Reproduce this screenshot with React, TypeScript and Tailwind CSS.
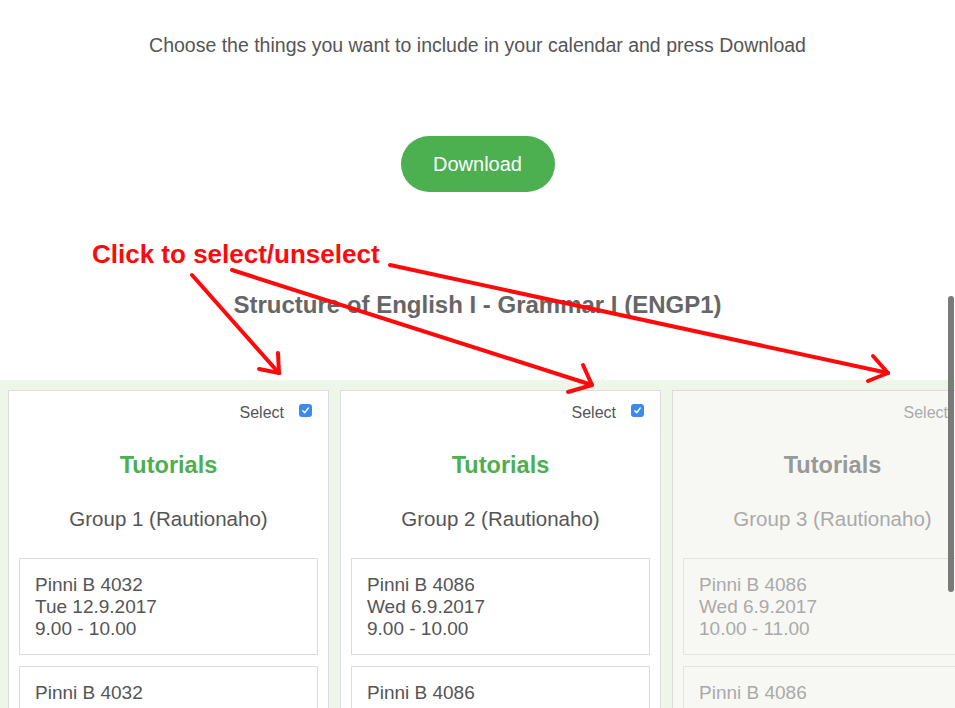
import React from "react";

type Slot = { place: string; date: string; time: string };
type Group = { name: string; active: boolean; slots: Slot[] };

const groups: Group[] = [
  {
    name: "Group 1 (Rautionaho)",
    active: true,
    slots: [
      { place: "Pinni B 4032", date: "Tue 12.9.2017", time: "9.00 - 10.00" },
      { place: "Pinni B 4032", date: "Tue 19.9.2017", time: "9.00 - 10.00" },
    ],
  },
  {
    name: "Group 2 (Rautionaho)",
    active: true,
    slots: [
      { place: "Pinni B 4086", date: "Wed 6.9.2017", time: "9.00 - 10.00" },
      { place: "Pinni B 4086", date: "Wed 13.9.2017", time: "9.00 - 10.00" },
    ],
  },
  {
    name: "Group 3 (Rautionaho)",
    active: false,
    slots: [
      { place: "Pinni B 4086", date: "Wed 6.9.2017", time: "10.00 - 11.00" },
      { place: "Pinni B 4086", date: "Wed 13.9.2017", time: "10.00 - 11.00" },
    ],
  },
];

function Checkbox({ checked }: { checked: boolean }) {
  if (!checked) {
    return <div className="w-[13px] h-[13px] rounded-[3px] border border-[#bbb] bg-white shrink-0" />;
  }
  return (
    <div className="w-[13px] h-[13px] rounded-[3px] bg-[#3a8bef] flex items-center justify-center shrink-0">
      <svg width="9" height="9" viewBox="0 0 9 9">
        <path d="M1.8 4.8 L3.7 6.7 L7.3 2" fill="none" stroke="white" strokeWidth="1.4" strokeLinecap="round" strokeLinejoin="round" />
      </svg>
    </div>
  );
}

function Card({ g }: { g: Group }) {
  const a = g.active;
  return (
    <div
      className={`w-[321px] shrink-0 border border-[#dcdcdc] pt-[13px] px-[10px] ${a ? "bg-white" : "bg-[#f7f8f4]"}`}
    >
      <div className="flex items-start justify-end h-[13px] pr-[6px] gap-[15px]">
        <span className={`mt-[1px] text-[16px] leading-[16px] ${a ? "text-[#555]" : "text-[#aaa]"}`}>Select</span>
        <Checkbox checked={a} />
      </div>
      <div
        className={`mt-[34px] text-center font-bold text-[23.5px] leading-[28px] ${a ? "text-[#4caf50]" : "text-[#999]"}`}
      >
        Tutorials
      </div>
      <div className={`mt-[28px] text-center text-[20.5px] leading-[24px] ${a ? "text-[#555]" : "text-[#aaa]"}`}>
        {g.name}
      </div>
      <div className="mt-[27px] flex flex-col gap-[11px] pb-[20px]">
        {g.slots.map((s, i) => (
          <div
            key={i}
            className={`border ${a ? "border-[#dcdcdc] text-[#555]" : "border-[#e3e3e3] text-[#aaa]"} px-[15px] pt-[15px] pb-[14px] text-[19px] leading-[22px]`}
          >
            <div>{s.place}</div>
            <div>{s.date}</div>
            <div>{s.time}</div>
          </div>
        ))}
      </div>
    </div>
  );
}

export default function App() {
  return (
    <div
      className="relative h-screen w-full overflow-hidden bg-white"
      style={{ fontFamily: '"Liberation Sans", Arial, Helvetica, sans-serif' }}
    >
      <div className="flex flex-col items-center pt-[34px]">
        <p className="text-[19.5px] leading-[22px] text-[#555]">
          Choose the things you want to include in your calendar and press Download
        </p>
        <button className="mt-[80px] h-[56px] w-[154px] rounded-full bg-[#4caf50] text-white text-[20px]">
          Download
        </button>
        <h2 className="mt-[100px] text-[24px] leading-[26px] font-bold text-[#666]">
          Structure of English I - Grammar I (ENGP1)
        </h2>
      </div>
      <div className="mt-[62px] bg-[#eef5e9] pt-[10px] px-[8px] flex gap-[11px] overflow-hidden">
        {groups.map((g, i) => (
          <Card key={i} g={g} />
        ))}
      </div>

      {/* annotation overlay */}
      <div className="absolute left-[92px] top-[241px] text-[26px] leading-[26px] font-bold text-[#ff0a0a]">
        Click to select/unselect
      </div>
      <svg className="absolute left-0 top-0 pointer-events-none" width="955" height="708" viewBox="0 0 955 708">
        <g stroke="#ff0a0a" strokeWidth="4" strokeLinecap="round" fill="none">
          <line x1="192" y1="275" x2="278" y2="372" />
          <line x1="278" y1="353" x2="279" y2="373" />
          <line x1="259" y1="369" x2="279" y2="373" />
          <line x1="232" y1="270" x2="592" y2="385" />
          <line x1="583" y1="365" x2="592" y2="385" />
          <line x1="568" y1="392" x2="592" y2="385" />
          <line x1="390" y1="265" x2="888" y2="373" />
          <line x1="873" y1="356" x2="888" y2="373" />
          <line x1="868" y1="381" x2="888" y2="373" />
        </g>
      </svg>

      {/* overlay scrollbar */}
      <div className="absolute right-[1px] top-[296px] h-[296px] w-[6px] rounded-full bg-[#7a7a7a]" />
    </div>
  );
}
